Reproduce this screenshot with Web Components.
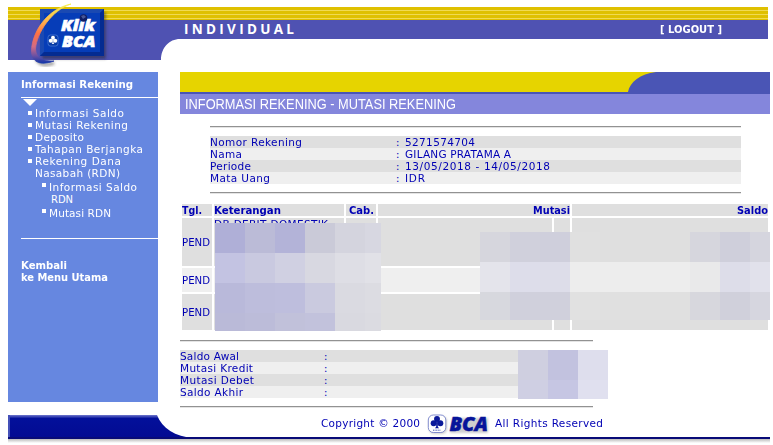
<!DOCTYPE html>
<html lang="id"><head><meta charset="utf-8"><title>KlikBCA Individual</title>
<style>html,body{margin:0;background:#fff}body{width:773px;height:445px;overflow:hidden;font:10px/12px "DejaVu Sans",Verdana,sans-serif;color:#0000b4}</style></head><body>
<bank-app></bank-app>
<script>
const define=(name,html,init)=>customElements.define(name,class extends HTMLElement{
  connectedCallback(){ if(this.shadowRoot)return;
    const r=this.attachShadow({mode:'open'}),t=document.createElement('template');
    t.innerHTML=typeof html==='function'?html(this):html; r.append(t.content.cloneNode(true)); if(init)init(this,r);}
});
/* Single line of text fitted to w pixels: bold or [stretch] text widens its glyphs, other text mostly its spacing. */
define('fit-text','<style>:host{display:inline-block;white-space:pre;height:12px;line-height:12px}span{display:inline-block;transform-origin:0 50%}</style><span></span>',(el,r)=>{
  const s=r.querySelector('span'); s.textContent=el.getAttribute('t');
  const w=+el.getAttribute('w'),n=s.textContent.length;
  if(w){ const nat=s.getBoundingClientRect().width, ratio=w/nat;
    const bold=+getComputedStyle(s).fontWeight>=700&&!el.hasAttribute('spaced');
    const k=bold||el.hasAttribute('stretch')?ratio:el.hasAttribute('spaced')?1:Math.max(1,Math.min(1.05,ratio));
    s.style.letterSpacing=((w/k-nat)/Math.max(1,n-1))+'px';
    if(k!==1)s.style.transform=`scaleX(${k})`;
    el.style.width=w+'px'; }
});
const clover='<circle cx="0" cy="-3.2" r="2.9"/><circle cx="-3.3" cy="1" r="2.9"/><circle cx="3.3" cy="1" r="2.9"/><path d="M-.8-1H.8V4.5L2 6H-2L-.8 4.5Z"/>';
define('klik-logo',`<style>:host{display:block;position:absolute;left:26px;top:0;width:84px;height:68px}svg{display:block;overflow:visible}</style>
<svg width="84" height="68" viewBox="26 0 84 68"><defs>
<linearGradient id="f" x1="0" y1="0" x2="1" y2="1"><stop offset="0" stop-color="#1948ba"/><stop offset=".5" stop-color="#0639b1"/><stop offset="1" stop-color="#04288c"/></linearGradient>
<linearGradient id="s" x1="0" y1="0" x2="0" y2="1"><stop offset="0" stop-color="#f6f04a"/><stop offset=".25" stop-color="#ffc04c"/><stop offset=".5" stop-color="#ff7144"/><stop offset=".72" stop-color="#d36b84"/><stop offset=".88" stop-color="#6650a5"/><stop offset="1" stop-color="#1236a8"/></linearGradient>
<filter id="b" x="-30%" y="-30%" width="160%" height="160%"><feGaussianBlur stdDeviation="1.5"/></filter></defs>
<path d="M42 12h64v47H42z" fill="#222" opacity=".45" filter="url(#b)"/>
<path d="M36 58Q40 68 54 63" fill="none" stroke="#333" stroke-width="3" opacity=".5" filter="url(#b)"/>
<path d="M40 9h64v47H40z" fill="url(#f)"/><path d="M40 9h64l-4 4H44v39l-4 4z" fill="#1a49b2"/><path d="M104 9v47H40l4-4h56V13z" fill="#042b91"/><path d="M44 13h56v39H44z" fill="#063db8"/>
<path d="M71 4C47 9 32 32 31.5 51C31.5 61 39 66.5 54 61C43 61.5 36 58 35.5 49C36.5 33 52 10 71 4Z" fill="url(#s)" stroke="url(#s)" stroke-width=".8"/>
<g fill="#fff" stroke="#fff" stroke-width=".6" font-family="Open Sans,Lato,sans-serif" font-weight="800" font-style="italic"><text x="61" y="31" font-size="15.5" textLength="34" lengthAdjust="spacingAndGlyphs">Klik</text><text x="62" y="46.5" font-size="15" textLength="33.5" lengthAdjust="spacingAndGlyphs">BCA</text></g>
<circle cx="83.5" cy="18" r="3.8" fill="#101e65"/><path d="M81 16l3-1 2 2-3 2z" fill="#485796"/>
<rect x="48" y="35" width="10" height="11" rx="2.5" fill="#0639a5" stroke="#5482db" stroke-width=".7"/><g fill="#fff" transform="translate(53 40) scale(.68)">${clover}</g>
</svg>`);
define('bca-logo',`<style>:host{display:block;width:62px;height:21px}svg{display:block;overflow:visible}</style><svg width="62" height="21" viewBox="0 0 62 21"><defs><filter id="b"><feGaussianBlur stdDeviation="1"/></filter></defs>
<g fill="#888" opacity=".4" filter="url(#b)"><rect x="2" y="2" width="18" height="18" rx="5"/><path d="M25 4h36v15H23z"/></g>
<rect x="1.3" y="1" width="17.5" height="17.5" rx="5" fill="#fff" stroke="#6472c4" stroke-width=".8"/><g fill="#0a199a" transform="translate(10 8.2) scale(1.02)">${clover}</g><path d="M6 16.2h8" stroke="#4053b0" stroke-dasharray="1 .6"/>
<text x="22.5" y="17" fill="#07149a" stroke="#07149a" stroke-width=".5" font-family="Open Sans,sans-serif" font-weight="800" font-style="italic" font-size="20" textLength="38.5" lengthAdjust="spacingAndGlyphs">BCA</text></svg>`);
define('top-banner',`<style>:host{display:block;position:relative;height:72px;margin-left:8px;width:760px;box-sizing:border-box;padding-top:7px}
.y{height:13px;background:repeating-linear-gradient(#dfc000 0 3px,#f1da52 3px 4px)}
.b{height:19px;background:#4f52b2;display:flex;align-items:center;color:#fff;font-weight:700}
.i{margin-left:176px;font:700 13.5px/19px "Open Sans",sans-serif}.l{margin-left:auto;margin-right:46px}
.c{height:21px;width:172px;display:block}</style><div class="y"></div><div class="b"><fit-text class="i" spaced t="INDIVIDUAL" w="110" style="height:19px;line-height:19px"></fit-text><fit-text class="l" t="[ LOGOUT ]" w="62"></fit-text></div><svg class="c"><path d="M0 0H172C161 0 153 9 153 21H0Z" fill="#4f52b2"/></svg>`);
define('menu-item',`<style>:host{display:flex;height:12px;align-items:center}i{width:4px;height:4px;background:#fff;margin-right:3px}:host([plain]) i{background:none}:host([raised]) i{margin-top:-4px}</style><i></i><slot></slot>`);
define('side-menu',`<style>:host{display:block;box-sizing:border-box;width:150px;height:330px;background:#6687e0;color:#fff;padding:7px 0 0 13px}
b{display:block;height:12px}.r{height:1px;background:#fff}.t{width:14px;height:7px;background:#fff;clip-path:polygon(0 0,100% 0,50% 100%);margin:1px 0 0 2px}
.m{padding-left:7px;margin-top:1px}.m fit-text{padding-top:1px}.s{padding-left:14px;margin-top:2px}.k{margin-top:21px}</style>
<b><fit-text t="Informasi Rekening" w="112"></fit-text></b><div class="r" style="margin-top:6px"></div><div class="t"></div>
<div class="m"><menu-item><fit-text t="Informasi Saldo" w="89"></fit-text></menu-item><menu-item><fit-text t="Mutasi Rekening" w="93"></fit-text></menu-item><menu-item><fit-text t="Deposito" w="49"></fit-text></menu-item><menu-item><fit-text t="Tahapan Berjangka" w="108"></fit-text></menu-item><menu-item><fit-text t="Rekening Dana" w="86"></fit-text></menu-item><menu-item plain><fit-text t="Nasabah (RDN)" w="85"></fit-text></menu-item>
<div class="s"><menu-item raised><fit-text t="Informasi Saldo" w="88"></fit-text></menu-item><menu-item plain><fit-text t="RDN" w="22" style="margin-left:2px"></fit-text></menu-item><menu-item raised style="margin-top:2px"><fit-text t="Mutasi RDN" w="62"></fit-text></menu-item></div></div>
<div class="r" style="margin-top:19px"></div><div class="k"><b><fit-text t="Kembali" w="46"></fit-text></b><b><fit-text t="ke Menu Utama" w="87"></fit-text></b></div>`);
define('thin-rule','<style>:host{display:block;height:2px;box-sizing:border-box;border-top:1px solid #929292;border-bottom:1px solid #e4e4e4}</style>');
define('info-row',e=>`<style>:host{display:grid;grid-template-columns:var(--c) 9px 1fr;height:12px;box-sizing:border-box;padding-top:1px;background:#efefef}:host(:nth-child(odd)){background:#dfdfdf}</style><fit-text t="${e.getAttribute('k')}" w="${e.getAttribute('kw')}"></fit-text><span>:</span>${e.hasAttribute('v')?`<fit-text t="${e.getAttribute('v')}" w="${e.getAttribute('vw')}"></fit-text>`:''}`);
define('mosaic-grid',e=>{const rows=e.getAttribute('c').split('/').map(x=>x.split(' '));
 return `<style>:host{position:absolute;display:grid;grid-template-columns:${e.getAttribute('cols')};grid-template-rows:${e.getAttribute('rows')}}</style>${rows.flat().map(c=>`<div style="background:#${c}"></div>`).join('')}`;});
define('page-title',`<style>:host{display:block;height:42px;width:590px;color:#fff}svg{display:block}.t{height:20px;background:#8486dc;padding-left:5px;font:14px/20px "Liberation Sans",Arial,sans-serif}</style><svg width="590" height="22"><path fill="#e6d400" d="M0 0h590v22H0z"/><path fill="#4a55b5" d="M590 0H476C460 2 450 10 448 20H0V22H590Z"/></svg><div class="t"><fit-text stretch t="INFORMASI REKENING - MUTASI REKENING" w="271" style="height:20px;line-height:20px"></fit-text></div>`);
define('mutation-table',`<style>:host{display:grid;width:586px;margin:10px 0 0 2px;grid-template-columns:30px 130px 30px 174px 16px 196px;grid-template-rows:12px 48px 24px 36px;gap:2px}
div{background:#dfdfdf;display:flex;align-items:center;overflow:hidden}.h{font-weight:700}.h fit-text{padding-top:2px}.r{justify-content:flex-end}.m{grid-column:span 2}.l{background:#efefef}.k{align-items:flex-start}.k fit-text{padding-top:1px}.p fit-text{padding-top:2px}</style>
<div class="h"><fit-text t="Tgl." w="20"></fit-text></div><div class="h"><fit-text t="Keterangan" w="67"></fit-text></div><div class="h" style="justify-content:center"><fit-text t="Cab." w="25"></fit-text></div><div class="h r m"><fit-text t="Mutasi" w="37"></fit-text></div><div class="h r"><fit-text t="Saldo" w="31"></fit-text></div>
<div class="p"><fit-text t="PEND" w="28"></fit-text></div><div class="k"><fit-text t="DB DEBIT DOMESTIK" w="114"></fit-text></div><div></div><div></div><div></div><div></div>
<div class="l p"><fit-text t="PEND" w="28"></fit-text></div><div class="l"></div><div class="l"></div><div class="l"></div><div class="l"></div><div class="l"></div>
<div class="p"><fit-text t="PEND" w="28"></fit-text></div><div></div><div></div><div></div><div></div><div></div>`);
define('account-content',`<style>:host{display:block;width:590px;margin-left:22px;height:336px}.i{width:531px;margin:0 0 0 30px}.g{margin:8px 0;--c:186px}.b{width:413px;margin-top:10px}.b .g{--c:144px;margin:8px 0}</style><page-title></page-title>
<div class="i"><thin-rule style="margin-top:12px"></thin-rule><div class="g"><info-row k="Nomor Rekening" kw="92" v="5271574704" vw="70"></info-row><info-row k="Nama" kw="32" v="GILANG PRATAMA A" vw="106"></info-row><info-row k="Periode" kw="41" v="13/05/2018 - 14/05/2018" vw="145"></info-row><info-row k="Mata Uang" kw="60" v="IDR" vw="20"></info-row></div><thin-rule></thin-rule></div>
<mutation-table></mutation-table>
<div class="b"><thin-rule></thin-rule><div class="g"><info-row k="Saldo Awal" kw="59"></info-row><info-row k="Mutasi Kredit" kw="73"></info-row><info-row k="Mutasi Debet" kw="74"></info-row><info-row k="Saldo Akhir" kw="63"></info-row></div><thin-rule></thin-rule></div>`);
define('page-footer',`<style>:host{display:block;position:relative;width:760px;height:34px;margin:3px 0 0 8px}svg{display:block;position:absolute;left:0;top:0}.f{display:flex;position:relative;align-items:center;height:22px;padding:2px 0 0 313px}bca-logo{margin:0 6px 0 7px}</style>
<svg width="762" height="34"><defs><linearGradient id="g" x1="0" y1="0" x2="0" y2="1"><stop stop-color="#7078cc"/><stop offset=".15" stop-color="#03109a"/><stop offset="1" stop-color="#030b92"/></linearGradient><linearGradient id="s" x1="0" y1="0" x2="0" y2="1"><stop stop-color="#aaa"/><stop offset="1" stop-color="#fff"/></linearGradient></defs><path d="M0 27h762v5H0z" fill="url(#s)"/><path d="M0 4H149C154 17 167 26 186 27H0Z" fill="url(#g)"/><path d="M0 4h2v22H0z" fill="#4450b8"/><path d="M0 26h762v2H0z" fill="#080b77"/></svg>
<div class="f"><fit-text t="Copyright © 2000" w="99"></fit-text><bca-logo></bca-logo><fit-text t="All Rights Reserved" w="108"></fit-text></div>`);
define('bank-app',`<style>:host{display:block;position:relative;width:773px;height:445px;overflow:hidden}.m{display:flex;margin-left:8px;height:336px}</style><top-banner></top-banner><klik-logo></klik-logo><div class="m"><side-menu></side-menu><account-content></account-content></div><page-footer></page-footer>
<mosaic-grid style="left:215px;top:223px" cols="30px 30px 30px 30px 30px 16px" rows="30px 30px 30px 18px" c="afafd7 bbbbd7 b3b3d8 cacad8 d4d4de d7d7e1/c3c3e2 c9c9e0 d0d0e2 d8d8e1 dedee5 e1e1e7/b9b9da bdbddc bebedd cacadf dadae1 dcdce2/babad8 bcbcd9 c1c1da c2c2dc d9d9e0 dbdbe1"></mosaic-grid>
<mosaic-grid style="left:480px;top:232px" cols="30px 30px 30px 30px 90px 30px 30px 20px" rows="30px 30px 28px" c="d6d6dd d0d0dc cfcfdc e0e0e0 dfdfdf d6d6dd cfcfdb d5d5de/e4e4eb ddddea dddde9 ededed ededed e9e9ea dddde9 e1e1eb/d7d8de d0d0dc d0d0dc e1e1e1 e0e0e0 d7d7dd d0d0db d6d6df"></mosaic-grid>
<mosaic-grid style="left:518px;top:350px" cols="30px 30px 30px" rows="30px 19px" c="cfcfe0 c2c2df dedeed/cfcfe3 c6c6e3 e0e0ef"></mosaic-grid>`);
</script></body></html>
